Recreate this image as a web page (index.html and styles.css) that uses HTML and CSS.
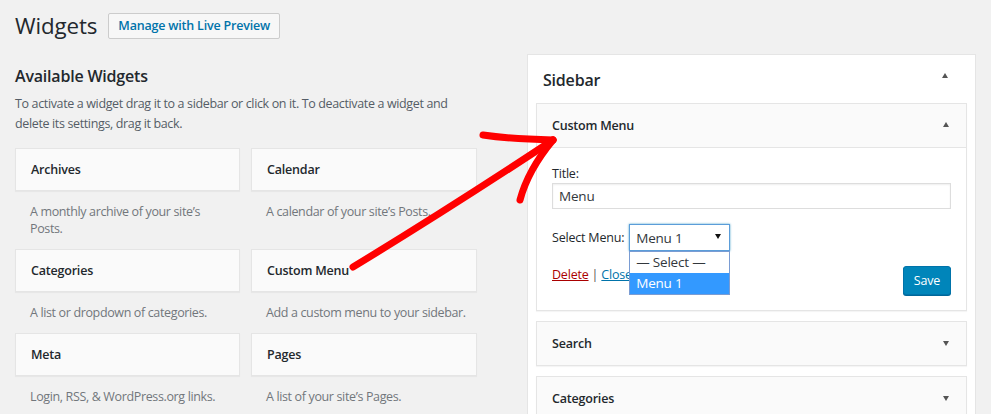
FILE: index.html
```html
<!DOCTYPE html>
<html>
<head>
<meta charset="utf-8">
<link rel="stylesheet" href="styles.css">
</head>
<body>
<div class="wrap">
  <div class="head">
    <h1 class="title">Widgets</h1>
    <a class="btn-secondary">Manage with Live Preview</a>
  </div>
  <div class="cols">
    <div class="left">
      <h2 class="avail-title">Available Widgets</h2>
      <p class="intro">To activate a widget drag it to a sidebar or click on it. To deactivate a widget and delete its settings, drag it back.</p>
      <div class="grid">
        <div class="item"><div class="card">Archives</div><div class="desc">A monthly archive of your site’s Posts.</div></div>
        <div class="item"><div class="card">Calendar</div><div class="desc">A calendar of your site’s Posts.</div></div>
        <div class="item"><div class="card">Categories</div><div class="desc">A list or dropdown of categories.</div></div>
        <div class="item"><div class="card">Custom Menu</div><div class="desc">Add a custom menu to your sidebar.</div></div>
        <div class="item"><div class="card">Meta</div><div class="desc">Login, RSS, &amp; WordPress.org links.</div></div>
        <div class="item"><div class="card">Pages</div><div class="desc">A list of your site’s Pages.</div></div>
      </div>
    </div>
    <div class="right">
      <div class="panel">
        <div class="panel-head"><span>Sidebar</span><i class="tri-up"></i></div>
        <div class="widget">
          <div class="widget-head"><span>Custom Menu</span><i class="tri-up"></i></div>
          <div class="widget-body">
            <label class="lbl">Title:</label>
            <div class="input">Menu</div>
            <div class="sel-row">
              <span class="sel-label">Select Menu:</span>
              <div class="select">
                <span>Menu 1</span><i class="tri-down dark"></i>
                <div class="dropdown">
                  <div class="opt">— Select —</div>
                  <div class="opt active">Menu 1</div>
                </div>
              </div>
            </div>
            <div class="actions">
              <div class="links"><a class="del">Delete</a> <span class="sep">|</span> <a class="close">Close</a></div>
              <a class="save">Save</a>
            </div>
          </div>
        </div>
        <div class="widget">
          <div class="widget-head"><span>Search</span><i class="tri-down"></i></div>
        </div>
        <div class="widget">
          <div class="widget-head"><span>Categories</span><i class="tri-down"></i></div>
        </div>
      </div>
    </div>
  </div>
</div>
<svg class="arrow" width="991" height="414" viewBox="0 0 991 414">
  <g fill="none" stroke="#f00" stroke-width="7" stroke-linecap="round" stroke-linejoin="round">
    <path d="M353 267 Q447 210 553 140"/>
    <path d="M483 135 Q510 139 553 140"/>
    <path d="M553 140 Q528 170 520 200"/>
  </g>
</svg>
</body>
</html>
```
FILE: styles.css
```css
* { box-sizing: border-box; }
html, body { margin: 0; padding: 0; }
body {
  background: #f1f1f1;
  font-family: "Open Sans", "Noto Sans", sans-serif;
  font-size: 12.5px;
  letter-spacing: -0.2px;
  color: #23282d;
  width: 991px;
  height: 414px;
  overflow: hidden;
  position: relative;
}
.wrap { padding: 13px 0 0 15px; }
.head { display: flex; align-items: center; height: 26px; }
.title {
  margin: 0 11px 0 0;
  font-size: 22.3px;
  font-weight: 400;
  line-height: 26px;
  letter-spacing: -0.1px;
  color: #23282d;
}
.btn-secondary {
  display: inline-block;
  height: 26px;
  line-height: 24px;
  padding: 0 9px;
  border: 1px solid #ccc;
  border-radius: 2px;
  background: #f7f7f7;
  color: #0073aa;
  font-weight: 600;
}
.cols { display: flex; margin-top: 15px; }
.left { width: 462px; margin-right: 50px; }
.avail-title {
  margin: 10px 0 0;
  font-size: 16px;
  font-weight: 600;
  line-height: 24px;
}
.intro {
  margin: 6px 0 0;
  line-height: 20px;
  letter-spacing: -0.36px;
  color: #555d66;
}
.grid {
  margin-top: 14px;
  display: grid;
  grid-template-columns: 225px 226px;
  column-gap: 11px;
}
.card {
  height: 43px;
  line-height: 41px;
  padding: 0 15px;
  border: 1px solid #e5e5e5;
  background: #fafafa;
  box-shadow: 0 1px 1px rgba(0,0,0,.04);
  font-weight: 600;
}
.desc {
  padding: 12px 8px 12px 15px;
  line-height: 17px;
  letter-spacing: -0.36px;
  color: #72777c;
}
.right { width: 449px; }
.panel {
  background: #fff;
  border: 1px solid #e5e5e5;
  padding: 0 8px;
  height: 400px;
}
.panel-head {
  display: flex;
  align-items: center;
  justify-content: space-between;
  padding: 13px 19px 11px 7px;
  line-height: 24px;
  font-size: 16px;
  font-weight: 600;
}
.panel-head .tri-up { margin-top: -10px; }
.tri-up {
  width: 0; height: 0;
  border-left: 3.5px solid transparent;
  border-right: 3.5px solid transparent;
  border-bottom: 5px solid #555;
}
.tri-down {
  width: 0; height: 0;
  border-left: 3.5px solid transparent;
  border-right: 3.5px solid transparent;
  border-top: 5px solid #555;
}
.tri-down.dark { border-top-color: #111; }
.widget {
  border: 1px solid #e5e5e5;
  background: #fafafa;
  margin-bottom: 10px;
  box-shadow: 0 1px 1px rgba(0,0,0,.04);
}
.widget-head {
  display: flex;
  align-items: center;
  justify-content: space-between;
  height: 43px;
  padding: 0 17px 0 15px;
  font-weight: 600;
}
.widget-head .tri-up { margin-top: -2px; }
.widget-body {
  background: #fff;
  border-top: 1px solid #e5e5e5;
  padding: 17px 15px 15px;
}
.lbl { display: block; line-height: 18px; }
.input {
  height: 26px;
  border: 1px solid #ddd;
  box-shadow: inset 0 1px 2px rgba(0,0,0,.07);
  padding: 0 6px;
  line-height: 24px;
  font-size: 13.5px;
  color: #32373c;
}
.sel-row { display: flex; align-items: center; margin-top: 15px; }
.sel-label { margin-right: 5px; }
.select {
  position: relative;
  width: 101px;
  height: 27px;
  border: 1px solid #5b9dd9;
  box-shadow: 0 0 2px rgba(30,140,190,.8);
  display: flex;
  align-items: center;
  justify-content: space-between;
  padding: 0 8px 0 6px;
  font-size: 13.5px;
  color: #32373c;
  background: #fff;
}
.select .tri-down { margin-top: -3px; }
.dropdown {
  position: absolute;
  top: 26px;
  left: -1px;
  width: 101px;
  border: 1px solid #7a9cd3;
  background: #fff;
  z-index: 2;
}
.opt {
  height: 21px;
  line-height: 20px;
  padding: 0 6px;
  font-size: 13.5px;
  color: #32373c;
}
.opt.active { background: #3399ff; color: #fff; }
.actions {
  display: flex;
  justify-content: space-between;
  align-items: flex-start;
  margin-top: 15px;
}
.links { line-height: 18px; }
.del { color: #a00; text-decoration: underline; }
.close { color: #0073aa; text-decoration: underline; }
.sep { color: #555; }
.save {
  display: inline-block;
  height: 29px;
  line-height: 27px;
  padding: 0 10px;
  background: #0085ba;
  border: 1px solid #0073aa;
  border-radius: 3px;
  box-shadow: 0 1px 0 #006799;
  color: #fff;
}
.arrow {
  position: absolute;
  left: 0;
  top: 0;
  pointer-events: none;
  z-index: 5;
}
```
